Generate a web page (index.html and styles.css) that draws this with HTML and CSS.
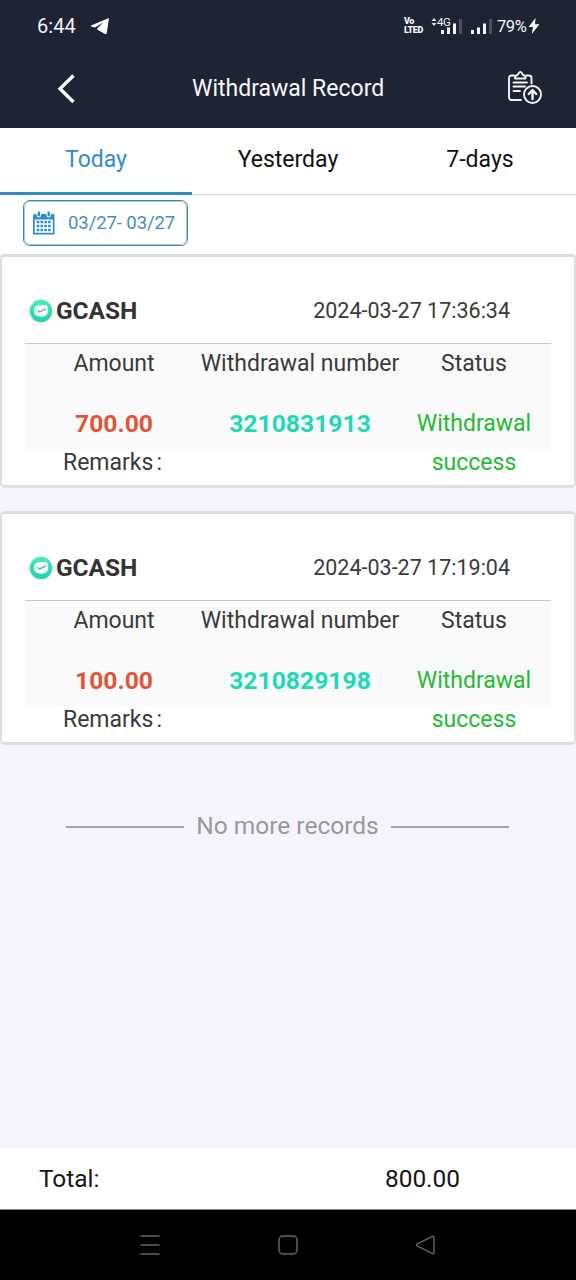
FILE: index.html
```html
<!DOCTYPE html>
<html lang="en">
<head>
<meta charset="utf-8">
<title>Withdrawal Record</title>
<link rel="stylesheet" href="styles.css">
</head>
<body>
<div class="screen">
  <div class="statusbar">
    <span class="clock">6:44</span>
    <svg class="plane" width="20" height="18" viewBox="0 0 20 18"><path d="M19 1 1 8.600Q.4 9 1.200 9.400L5 10.500 13.500 5.200 7.300 11.300Q6.800 12 7.600 12.700L15 17Q16.500 17.500 16.800 16Z" fill="#fff"/></svg>
    <span class="volte"><span>Vo</span><span>LTED</span></span>
    <svg class="updown" width="6" height="10" viewBox="0 0 6 10"><path d="M.5 4 3 1 5.500 4ZM.5 6 3 9 5.500 6Z" fill="#dde1ea"/></svg>
    <span class="net">4G</span>
    <svg class="bars bars-a" width="21" height="17" viewBox="0 0 21 17"><path d="M0 12h3v4H0ZM6 9.500h3V16H6ZM12 5.500h3V16h-3Z" fill="#f3f5fa"/><path d="M18 1h3v15h-3Z" fill="#4a505e"/></svg>
    <svg class="bars bars-b" width="21" height="17" viewBox="0 0 21 17"><path d="M0 12h3v4H0ZM6 9.500h3V16H6ZM12 5.500h3V16h-3Z" fill="#f3f5fa"/><path d="M18 1h3v15h-3Z" fill="#4a505e"/></svg>
    <span class="battery">79%</span>
    <svg class="bolt" width="12" height="16" viewBox="0 0 12 16"><path d="M7.500 0 .5 9H5L3.800 16 11.500 6.200H7Z" fill="#fff"/></svg>
  </div>
  <header class="header">
    <svg class="back" width="18" height="30" viewBox="0 0 18 30"><path d="M16.500 1.500 3 14.800 16.500 28" fill="none" stroke="#fff" stroke-width="3.400"/></svg>
    <h1 class="title">Withdrawal Record</h1>
    <svg class="record" width="36" height="36" viewBox="0 0 36 36" fill="none" stroke="#f1f3f8" stroke-width="1.900" stroke-linecap="round" stroke-linejoin="round"><path d="M7 4.500H4.500Q2 4.500 2 7V26Q2 29 4.500 29H14M19.500 4.500H22Q24.500 4.500 24.500 7V12.500"/><path d="M8 7.500Q7.500 4.500 10.500 4L12 1.800Q13.300 0 14.600 1.800L16 4Q19 4.500 18.500 7.500Z"/><path d="M6.500 11.500H20M6.500 15.500H18M6.500 20H13"/><circle cx="25.500" cy="23.500" r="8.500"/><path d="M25.500 28V19.500M21.800 23 25.500 19.200 29.200 23" stroke-width="2.400"/></svg>
  </header>
  <nav class="tabs">
    <span class="tab active">Today</span>
    <span class="tab">Yesterday</span>
    <span class="tab">7-days</span>
  </nav>
  <div class="filter">
    <div class="daterange">
      <svg width="22" height="24" viewBox="0 0 22 24"><path d="M0 4.500Q0 3 1.500 3H20Q21.500 3 21.500 4.500V23.500H0Z" fill="#318ccf"/><path d="M1.700 8.500H19.800V21.800H1.700Z" fill="#fff"/><path d="M3.700 11H18M3.700 15H18M3.700 19H18" stroke="#318ccf" stroke-width="2.500" stroke-dasharray="2.600 1.200"/><path d="M5.800 1.800V4.200M15.700 1.800V4.200" stroke="#fff" stroke-width="4.500" stroke-linecap="round"/><path d="M5.800 1.800V4.200M15.700 1.800V4.200" stroke="#318ccf" stroke-width="2.500" stroke-linecap="round"/></svg>
      <span class="range">03/27- 03/27</span>
    </div>
  </div>
  <main class="list">
    <section class="card">
      <div class="card-head">
        <svg class="logo" width="24" height="24" viewBox="0 0 24 24"><defs><linearGradient id="mint" x2="0" y2="1"><stop stop-color="#4eeab9"/><stop offset="1" stop-color="#25cfb3"/></linearGradient></defs><circle cx="12" cy="12" r="11.300" fill="url(#mint)"/><path d="M5 12Q5 6.500 10 6.300L17 5.800Q19.500 8 19 12C19 16 16 17.800 11.500 17.800L7.500 16.800Q5 15 5 12Z" fill="#effffb"/><path d="M8.500 11.300 10.500 13 17 9.800" fill="none" stroke="#4fa898" stroke-width="1.100"/></svg>
        <b class="bank">GCASH</b>
        <time class="time">2024-03-27 17:36:34</time>
      </div>
      <div class="grid">
        <span class="label">Amount</span><span class="label">Withdrawal number</span><span class="label">Status</span>
        <b class="amount">700.00</b><b class="number">3210831913</b><span class="status">Withdrawal success</span>
      </div>
      <div class="remarks">Remarks<span class="colon">:</span></div>
    </section>
    <section class="card">
      <div class="card-head">
        <svg class="logo" width="24" height="24" viewBox="0 0 24 24"><circle cx="12" cy="12" r="11.300" fill="url(#mint)"/><path d="M5 12Q5 6.500 10 6.300L17 5.800Q19.500 8 19 12C19 16 16 17.800 11.500 17.800L7.500 16.800Q5 15 5 12Z" fill="#effffb"/><path d="M8.500 11.300 10.500 13 17 9.800" fill="none" stroke="#4fa898" stroke-width="1.100"/></svg>
        <b class="bank">GCASH</b>
        <time class="time">2024-03-27 17:19:04</time>
      </div>
      <div class="grid">
        <span class="label">Amount</span><span class="label">Withdrawal number</span><span class="label">Status</span>
        <b class="amount">100.00</b><b class="number">3210829198</b><span class="status">Withdrawal success</span>
      </div>
      <div class="remarks">Remarks<span class="colon">:</span></div>
    </section>
    <div class="end"><i class="rule"></i><span class="end-text">No more records</span><i class="rule"></i></div>
  </main>
  <footer class="total"><span class="total-label">Total:</span><span class="total-value">800.00</span></footer>
  <div class="navbar">
    <svg width="20" height="20" viewBox="0 0 20 20"><path d="M.5 1H19.500M.5 10H19.500M.5 19H19.500" stroke="#666" stroke-width="1.500"/></svg>
    <svg width="20" height="20" viewBox="0 0 20 20"><rect x="1" y="1" width="18" height="18" rx="4" fill="none" stroke="#666" stroke-width="1.500"/></svg>
    <svg width="20" height="20" viewBox="0 0 20 20"><path d="M16.300 1.300 1 9Q-.5 10 1 11L16.300 18.700Q18 19 18 17.500V2.500Q18 1 16.300 1.300Z" fill="none" stroke="#666" stroke-width="1.400"/></svg>
  </div>
</div>
</body>
</html>
```
FILE: styles.css
```css
* { box-sizing: border-box; }
body { margin: 0; font-family: Roboto, "Liberation Sans", sans-serif; }
svg { display: block; flex: none; }
.screen { width: 576px; height: 1280px; display: flex; flex-direction: column; background: #f5f4fc; overflow: hidden; }
.statusbar { height: 52px; flex: none; background: #1e2433; color: #f3f5fa; display: flex; align-items: center; padding-left: 37px; }
.clock { font-size: 20px; line-height: 24px; width: 53px; letter-spacing: .1px; }
.plane { width: 20px; height: 18px; }
.volte { display: flex; flex-direction: column; width: 20px; margin-left: 294px; font-size: 9px; font-weight: 900; line-height: 9px; letter-spacing: -.4px; }
.updown { margin: -9px 0 0 7px; }
.net { width: 13px; margin-top: -8px; font-size: 11.500px; line-height: 12px; letter-spacing: -.5px; }
.bars-a { margin-left: -9px; }
.bars-b { margin-left: 9px; }
.battery { margin-left: 5px; width: 30px; font-size: 16.500px; letter-spacing: -.4px; white-space: nowrap; }
.bolt { margin-left: 1px; }
.header { height: 76px; flex: none; background: #1e2433; display: flex; align-items: center; padding: 0 33px 3px 57px; }
.title { margin: 0 auto 0 117px; color: #f7f8fb; font-size: 23px; font-weight: 400; line-height: 30px; white-space: nowrap; }
.tabs { height: 67px; flex: none; display: grid; grid-template-columns: repeat(3, 1fr); background: #fff; border-bottom: 1px solid #ddd; }
.tab { height: 67px; padding-bottom: 4px; display: flex; align-items: center; justify-content: center; font-size: 23px; color: #111; }
.tab.active { color: #318ccf; border-bottom: 3px solid #318cc4; padding-bottom: 1px; }
.filter { height: 59px; flex: none; background: #fff; padding: 5px 0 0 23px; }
.daterange { width: 165px; height: 46px; border: 1.500px solid #4088b4; outline: .5px solid #a9cbdf; outline-offset: -2px; border-radius: 7px; display: flex; align-items: center; gap: 13px; padding-left: 9px; }
.range { color: #438fb9; font-size: 18.500px; letter-spacing: -.08px; white-space: nowrap; }
.list { flex: 1; display: flex; flex-direction: column; }
.card { height: 234px; flex: none; margin-bottom: 23px; background: #fff; border: solid #dedee1; border-width: 3px 2px; border-radius: 5px; padding: 0 23px; }
.card-head { height: 87px; display: flex; align-items: center; border-bottom: 1px solid #c9c9c9; padding: 21px 41px 0 4px; }
.bank { margin-left: 3px; font-size: 24.500px; letter-spacing: -.1px; color: #333; }
.time { margin-left: auto; font-size: 21.500px; color: #3a3a3a; }
.grid { height: 105px; display: grid; grid-template-columns: 178px 194px 154px; grid-template-rows: 39px 66px; background: #fafafa; text-align: center; font-size: 23px; line-height: 39px; color: #3a3a3a; }
.label { display: flex; justify-content: center; white-space: nowrap; }
.amount, .number, .status { padding-top: 21px; }
.amount, .number { font-size: 24.700px; }
.amount { color: #e2533c; }
.number { color: #1fd9b6; }
.status { color: #1fbb36; }
.remarks { padding-left: 38px; font-size: 23px; line-height: 28px; color: #3a3a3a; }
.colon { margin-left: 3px; }
.end { display: flex; align-items: center; justify-content: center; gap: 12px; padding: 43px 1px 0 0; }
.rule { width: 118px; height: 2px; margin-top: 2px; background: #a5a5a8; }
.end-text { font-size: 24.500px; line-height: 30px; color: #999; white-space: nowrap; }
.total { height: 62px; flex: none; display: flex; align-items: center; background: #fff; color: #151515; font-size: 24.400px; padding-left: 39px; border-bottom: 1px solid #888; }
.total-label { width: 346px; }
.navbar { height: 70px; flex: none; background: #000; display: flex; align-items: center; gap: 118px; padding-left: 140px; }
```
